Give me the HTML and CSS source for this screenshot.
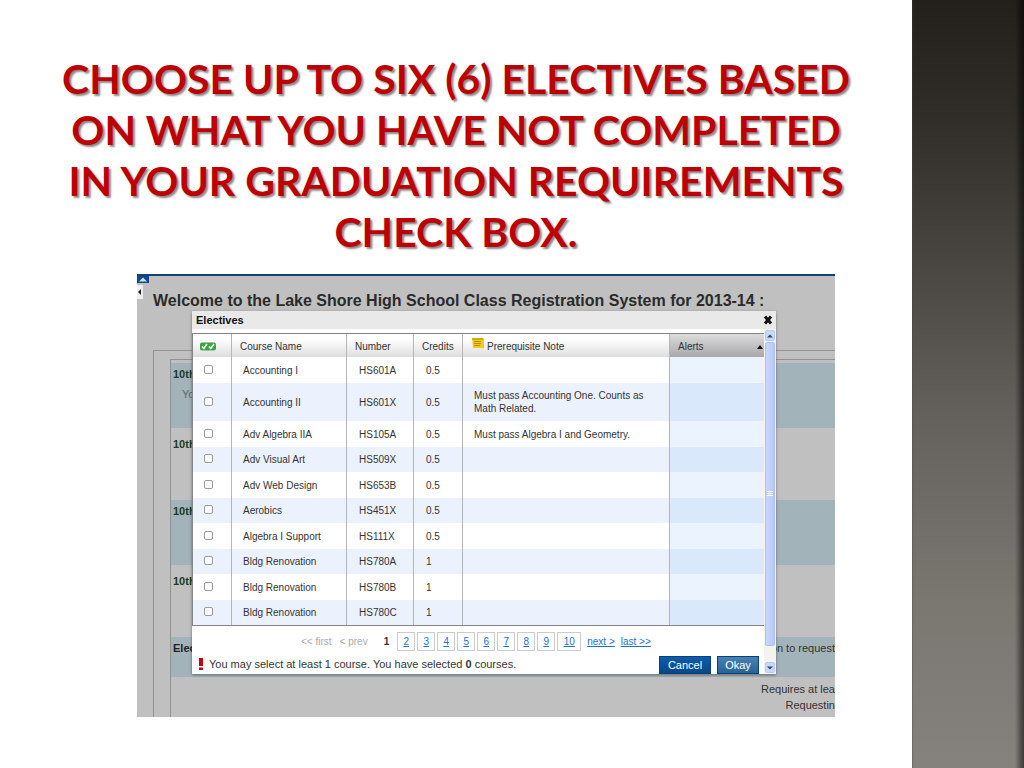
FILE: index.html
```html
<!DOCTYPE html>
<html lang="en">
<head>
<meta charset="utf-8">
<title>Choose electives</title>
<link rel="stylesheet" href="styles.css">
</head>
<body>
<div class="slide">
<main class="content">
<h1 class="headline">Choose up to six (6) electives based<br>on what you have not completed<br>in your graduation requirements<br>check box.</h1>
<section class="app">
  <button class="collapse-top" aria-label="Collapse header"><svg viewBox="0 0 12 8"><path d="M2 5.5 6 1.5l4 4z" fill="#d5e4f2"/></svg></button>
  <button class="collapse-side" aria-label="Collapse sidebar"><svg viewBox="0 0 6 12"><path d="M4 3v6L1 6z" fill="#222"/></svg></button>
  <h2 class="welcome">Welcome to the Lake Shore High School Class Registration System for 2013-14 :</h2>
  <div class="panel">
    <div class="requests">
      <div class="request shaded"><b class="grade">10th</b><span class="hint">Yo</span></div>
      <div class="request plain"><b class="grade">10th</b></div>
      <div class="request shaded"><b class="grade">10th</b></div>
      <div class="request plain"><b class="grade">10th</b></div>
      <div class="request electives"><b>Elec</b><span>on to request</span></div>
      <div class="totals"><span>Requires at lea</span><span>Requestin</span></div>
    </div>
  </div>
  <div class="dialog" role="dialog" aria-labelledby="dialog-title">
    <header class="titlebar">
      <h3 id="dialog-title">Electives</h3>
      <button class="close" aria-label="Close"><svg viewBox="0 0 10 10"><path d="M2 1.5 8 8.5M8 1.5 2 8.5" stroke="#111" stroke-width="3"/></svg></button>
    </header>
    <div class="dialog-body">
      <div class="pane">
        <table class="courses">
          <colgroup><col class="c-check"><col class="c-name"><col class="c-number"><col class="c-credits"><col class="c-note"><col class="c-alerts"></colgroup>
          <thead><tr>
            <th><svg class="checks" viewBox="0 0 16 9" role="img" aria-label="Selected"><rect width="16" height="8" y=".5" rx="2" fill="#39a541"/><path d="m2 4.500 1.800 2L7 2M9 4.500l1.800 2L14 2" fill="none" stroke="#fff" stroke-width="1.500"/></svg></th>
            <th>Course Name</th><th>Number</th><th>Credits</th>
            <th><span class="note-head"><svg class="note" viewBox="0 0 14 14" aria-hidden="true"><path d="M1 1h11l1 1v9l-3 2v-2H2z" fill="#f4c91d"/><path d="M1 1h11v2H1z" fill="#d9a60c"/><path d="M3 4.500h7M3 6.500h7M3 8.500h6" stroke="#a38310" stroke-width=".8"/><path d="m10 13 3-2h-3z" fill="#fff0a0"/></svg>Prerequisite Note</span></th>
            <th class="sorted"><span class="sort-label">Alerts<svg class="arrow" viewBox="0 0 6 4" aria-hidden="true"><path d="M0 4 3 0l3 4z" fill="#111"/></svg></span></th>
          </tr></thead>
          <tbody>
            <tr><td><input type="checkbox" aria-label="Accounting I"></td><td>Accounting I</td><td>HS601A</td><td>0.5</td><td></td><td></td></tr>
            <tr class="tall"><td><input type="checkbox" aria-label="Accounting II"></td><td>Accounting II</td><td>HS601X</td><td>0.5</td><td>Must pass Accounting One. Counts as<br>Math Related.</td><td></td></tr>
            <tr><td><input type="checkbox" aria-label="Adv Algebra IIA"></td><td>Adv Algebra IIA</td><td>HS105A</td><td>0.5</td><td>Must pass Algebra I and Geometry.</td><td></td></tr>
            <tr><td><input type="checkbox" aria-label="Adv Visual Art"></td><td>Adv Visual Art</td><td>HS509X</td><td>0.5</td><td></td><td></td></tr>
            <tr><td><input type="checkbox" aria-label="Adv Web Design"></td><td>Adv Web Design</td><td>HS653B</td><td>0.5</td><td></td><td></td></tr>
            <tr><td><input type="checkbox" aria-label="Aerobics"></td><td>Aerobics</td><td>HS451X</td><td>0.5</td><td></td><td></td></tr>
            <tr><td><input type="checkbox" aria-label="Algebra I Support"></td><td>Algebra I Support</td><td>HS111X</td><td>0.5</td><td></td><td></td></tr>
            <tr><td><input type="checkbox" aria-label="Bldg Renovation HS780A"></td><td>Bldg Renovation</td><td>HS780A</td><td>1</td><td></td><td></td></tr>
            <tr><td><input type="checkbox" aria-label="Bldg Renovation HS780B"></td><td>Bldg Renovation</td><td>HS780B</td><td>1</td><td></td><td></td></tr>
            <tr><td><input type="checkbox" aria-label="Bldg Renovation HS780C"></td><td>Bldg Renovation</td><td>HS780C</td><td>1</td><td></td><td></td></tr>
          </tbody>
        </table>
        <nav class="pager" aria-label="Pages">
          <span class="off">&lt;&lt; first</span><span class="off">&lt; prev</span><b class="current">1</b>
          <div class="pages"><a href="#">2</a><a href="#">3</a><a href="#">4</a><a href="#">5</a><a href="#">6</a><a href="#">7</a><a href="#">8</a><a href="#">9</a><a class="wide" href="#">10</a></div>
          <a class="step" href="#">next &gt;</a><a class="step" href="#">last &gt;&gt;</a>
        </nav>
        <footer class="footer">
          <svg class="alert" viewBox="0 0 4 12" aria-hidden="true"><path d="M0 0h4v8H0zM0 9.500h4V12H0z" fill="#c4000c"/></svg>
          <p class="message">You may select at least <span>1</span> course. You have selected <b>0</b> courses.</p>
          <button class="action">Cancel</button><button class="action okay">Okay</button>
        </footer>
      </div>
      <div class="scrollbar">
        <button class="scroll-btn" aria-label="Scroll up"><svg viewBox="0 0 8 8"><path d="M1 5.500h6L4 2.500z" fill="#33476f"/></svg></button>
        <div class="thumb"><svg viewBox="0 0 8 8"><path d="M1 1.500h6M1 3.500h6M1 5.500h6" stroke="#fff"/></svg></div>
        <button class="scroll-btn" aria-label="Scroll down"><svg viewBox="0 0 8 8"><path d="M1 2.500h6L4 5.500z" fill="#33476f"/></svg></button>
      </div>
    </div>
  </div>
</section>
</main>
<aside class="band"></aside>
</div>
</body>
</html>
```
FILE: styles.css
```css
* { box-sizing: border-box; }
body { margin: 0; background: #fff; font-family: "Liberation Sans", Arial, sans-serif; color: #333; }
h1, h2, h3, p { margin: 0; }
button { padding: 0; border: 0; font-family: inherit; }
svg { display: block; }

.slide { display: grid; grid-template-columns: 1fr 112px; min-height: 100vh; }
.content { display: flex; flex-direction: column; align-items: center; gap: 17px; padding: 53px 0 51px; }
.band {
  background: linear-gradient(90deg, #44444066 0, transparent 2px, transparent 103px, #0006 109px, #0008 100%),
    linear-gradient(#231f1b 0, #302d29 15%, #46433e 32%, #65615c 55%, #7a7670 78%, #85827d 100%);
}
.headline {
  font: bold 41px/51px Lato, sans-serif; text-transform: uppercase; text-align: center;
  white-space: nowrap; color: #bd0006; text-shadow: 2px 2px 2px #0007;
}

.app { position: relative; width: 698px; margin-left: 60px; flex: 1; background: #c0c0c0; border-top: 2px solid #15426f; overflow: hidden; }
.collapse-top { position: absolute; left: 0; top: 0; width: 12px; height: 7px; background: #11498c; }
.collapse-side { position: absolute; left: 0; top: 9px; width: 6px; height: 14px; background: #eee; }
.welcome { padding: 15px 16px 0; font-size: 16px; line-height: 20px; color: #2b2b2b; white-space: nowrap; }
.panel { margin: 39px 0 0 16px; padding: 8px 0 0 16px; border: 1px solid #929292; border-width: 1px 0 0 1px; height: 367px; }
.requests { border: 1px solid #929292; border-width: 1px 0 0 1px; padding-top: 3px; height: 100%; font-size: 11px; }
.request { padding: 5px 2px; }
.request b { color: #222; }
.request .grade { color: #1d3b26; }
.shaded { height: 65px; background: #a2b3ba; }
.plain { height: 72px; padding-top: 10px; }
.hint { display: block; padding: 8px 9px; color: #666; }
.electives { display: flex; justify-content: space-between; height: 40px; padding-right: 0; background: #a2b3ba; }
.totals { display: flex; flex-direction: column; align-items: flex-end; gap: 4px; padding-top: 6px; }

.dialog { position: absolute; left: 55px; top: 35px; width: 584px; background: #fff; box-shadow: 0 1px 3px #0006; font-size: 10px; }
.titlebar { display: flex; justify-content: space-between; align-items: center; height: 18px; padding: 0 3px 0 4px; background: #e9e9e9; }
.titlebar h3 { font-size: 11px; color: #111; }
.close { width: 10px; height: 10px; background: none; }
.dialog-body { display: flex; }
.pane { flex: 1; padding-top: 4px; }
.courses { width: 100%; table-layout: fixed; border-collapse: separate; border-spacing: 0; border: 1px solid #858585; border-width: 1px 0 1px 1px; line-height: 13px; }
.c-check { width: 39px; }
.c-name { width: 115px; }
.c-number { width: 67px; }
.c-credits { width: 49px; }
.c-note { width: 207px; }
.courses th { height: 23px; padding: 2px 8px 0; text-align: left; font-weight: normal; white-space: nowrap; background: linear-gradient(#fff 20%, #dedede); border-right: 1px solid #b5b5b5; color: #333; }
.courses td { height: 26px; padding: 0 12px; border-right: 1px solid #b5b5b5; }
.courses td:nth-child(2), .courses td:nth-child(5) { padding: 0 11px; }
.courses tr > :first-child { padding-left: 7px; }
.courses tbody tr:nth-child(even) td { height: 25px; background: #ebf2fe; }
.courses tbody .tall:nth-child(even) td { height: 38px; }
.courses tr > :last-child { border-right: 0; }
.courses tbody tr td:last-child { background: #ebf3fe; }
.courses tbody tr:nth-child(even) td:last-child { background: #dae8fc; }
.courses th.sorted { padding-right: 1px; background: linear-gradient(#ddd, #a8a8ab); }
.sort-label, .note-head { display: flex; justify-content: space-between; align-items: center; }
.note-head { justify-content: flex-start; align-items: flex-end; gap: 2px; height: 13px; }
.arrow { width: 6px; height: 4px; }
.checks { width: 16px; height: 9px; }
.note { width: 14px; height: 14px; margin-bottom: 2px; }
.courses input { appearance: none; display: block; width: 9px; height: 9px; margin: 0 4px 2px; border: 1px solid #9a9a9a; border-radius: 2px; background: #fff; }
.pager { display: flex; align-items: center; gap: 6px; height: 30px; padding-left: 109px; font-size: 10px; }
.off { margin-right: 2px; color: #aaa; }
.current { margin: 0 2px 0 8px; }
.pages { display: flex; gap: 2px; }
.pages a { width: 18px; height: 19px; line-height: 18px; border: 1px solid #ccc; text-align: center; }
.pages .wide { width: 24px; }
.pager a { color: #1f6fd1; }
.footer { display: flex; align-items: flex-end; gap: 6px; padding: 0 5px 0 7px; }
.alert { width: 4px; height: 12px; margin-bottom: 4px; }
.message { flex: 1; padding-bottom: 3px; font-size: 11px; line-height: 13px; white-space: nowrap; }
.action { width: 52px; height: 18px; border: 1px solid #0a3f7a; background: linear-gradient(#0c5cae, #084785); color: #fff; font-size: 11px; }
.okay { width: 42px; background: linear-gradient(#4583b5, #2a628f); }
.scrollbar { display: flex; flex-direction: column; width: 12px; padding: 1px; background: #f4f3ee; }
.scroll-btn { display: grid; place-items: center; height: 11px; border: 1px solid #b7c8f2; border-radius: 2px; background: #c9d7fb; }
.scroll-btn svg, .thumb svg { width: 8px; height: 8px; }
.thumb { display: grid; place-items: center; flex: 1; margin: 1px 0 16px; border: 1px solid #afc0f2; border-radius: 2px; background: linear-gradient(90deg, #cad7fd, #b5c8f8); }
```
